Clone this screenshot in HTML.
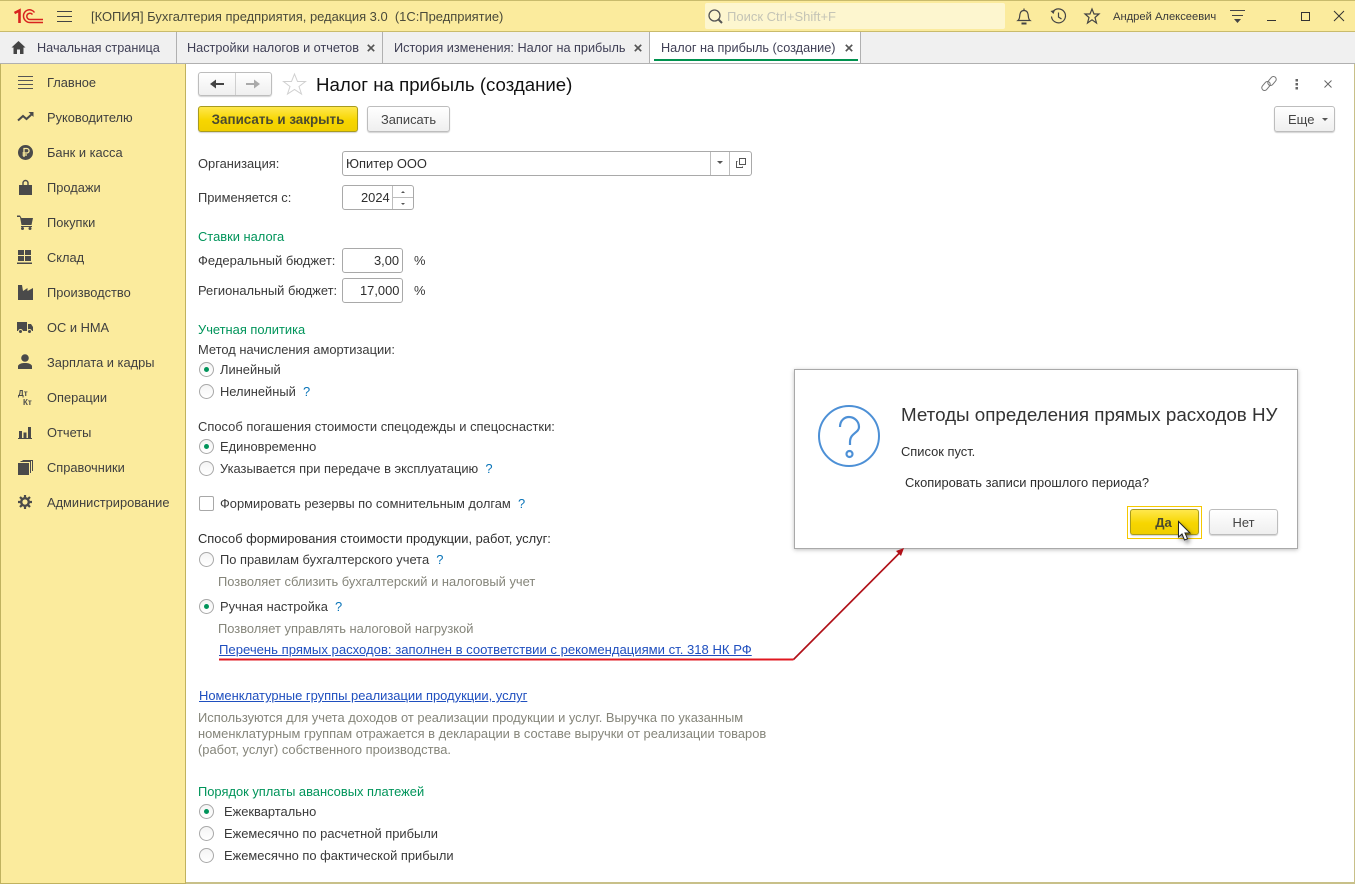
<!DOCTYPE html>
<html lang="ru"><head><meta charset="utf-8"><title>Налог на прибыль</title>
<style>
*{box-sizing:border-box}
html,body{margin:0;padding:0;width:1355px;height:884px;overflow:hidden;background:#fff}
body{position:relative;font-family:"Liberation Sans",Arial,sans-serif;font-size:12.9px;color:#4b4b4b}
.a{position:absolute}
.t{position:absolute;white-space:nowrap;line-height:16px;height:16px}
.d{color:#2e2e2e}
.s{color:#3a3a3a}
.g{color:#00945a}
.h{color:#85857a}
.q{color:#0a74b8;font-weight:400}
.l{color:#1f4fbf;text-decoration:underline;font-size:13.1px}
.r{position:absolute;width:15px;height:15px;border:1px solid #a8a8a8;border-radius:50%;background:linear-gradient(#f4f4f4,#fff)}
.r.on::after{content:"";position:absolute;left:4px;top:4px;width:5px;height:5px;border-radius:50%;background:#00945a}
.inp{position:absolute;background:#fff;border:1px solid #a9a9a9;border-radius:3px}
.btn{position:absolute;border:1px solid #bdbdbd;border-radius:3px;background:linear-gradient(#fff,#efefef);box-shadow:0 1px 1px rgba(0,0,0,.18);text-align:center;color:#444}
.y{border:1px solid #a89b1e;background:linear-gradient(#ffe84d,#f7d600 55%,#f0cf00);font-weight:700;color:#4a4a30}
.tab{position:absolute;top:32px;height:32px;border-right:1px solid #b0b0b0}
.tt{font-size:12.7px;color:#3f3f55}
.nav{position:absolute;left:47px;white-space:nowrap;line-height:16px;color:#3f3f3f;font-size:12.85px}
svg{position:absolute;overflow:visible}
</style></head><body>

<!-- top bar -->
<div class="a" style="left:0;top:0;width:1355px;height:32px;background:#fbeb9d;border-top:1px solid #c9bb6c;border-bottom:1px solid #c9bb6c"></div>
<svg style="left:14px;top:9px" width="30" height="15" viewBox="0 0 30 15"><g fill="none" stroke="#d8231f"><path d="M.5 4 5.500 1.500V14" stroke-width="2.600"/><path d="M20.500 3.500A6 6 0 0 0 9.500 7 6.500 6.500 0 0 0 16 13.500H29" stroke-width="1.500"/><path d="M18.500 5.500A3.200 3.200 0 0 0 12.800 7 3.200 3.200 0 0 0 16 10.500H29" stroke-width="1.500"/></g></svg>
<svg style="left:57px;top:11px" width="15" height="11"><path d="M0 .5H15M0 5.500H15M0 10.500H15" stroke="#444" stroke-width="1"/></svg>
<div class="t" style="left:91px;top:9px;color:#4a4a3a;font-size:12.95px">[КОПИЯ] Бухгалтерия предприятия, редакция 3.0&nbsp; (1С:Предприятие)</div>
<div class="a" style="left:705px;top:3px;width:300px;height:26px;background:#fdf6cf;border-radius:2px"></div>
<svg style="left:708px;top:9px" width="16" height="16"><circle cx="6.500" cy="6.500" r="5.500" fill="none" stroke="#555" stroke-width="1.300"/><path d="M10.500 10.500 14 14" stroke="#555" stroke-width="2"/></svg>
<div class="t" style="left:727px;top:9px;color:#c4c4b6;font-size:13px">Поиск Ctrl+Shift+F</div>
<svg style="left:1016px;top:8px" width="16" height="18" fill="none" stroke="#444" stroke-width="1.200"><path d="M2 12.500C4 11 3.500 8 4 6 4.500 3.500 6 2.500 8 2.500S11.500 3.500 12 6C12.500 8 12 11 14 12.500Z"/><path d="M8 .5V2.500"/><path d="M5.500 15.500H10.500" stroke-width="2"/></svg>
<svg style="left:1050px;top:8px" width="17" height="17" fill="none" stroke="#444" stroke-width="1.200"><path d="M3 3.500A7 7 0 1 1 1.500 8.500"/><path d="M.5 3 3.500 6 5 2" fill="#444" stroke="none"/><path d="M8.500 4.500V9L11.500 11"/></svg>
<svg style="left:1084px;top:8px" width="16" height="16" fill="none" stroke="#444" stroke-width="1.200"><path d="M8 1 10 6H15L11 9.500 12.500 15 8 11.800 3.500 15 5 9.500 1 6H6Z"/></svg>
<div class="t" style="left:1113px;top:9px;font-size:11.2px;color:#3a3a3a">Андрей Алексеевич</div>
<svg style="left:1230px;top:10px" width="15" height="15"><path d="M0 .5H15M2 5.500H13" stroke="#444"/><path d="M4 9H11L7.500 13Z" fill="#444"/></svg>
<div class="a" style="left:1267px;top:20px;width:9px;height:1px;background:#333"></div>
<div class="a" style="left:1301px;top:12px;width:9px;height:9px;border:1.400px solid #333"></div>
<svg style="left:1334px;top:11px" width="10" height="10"><path d="M0 0 10 10M10 0 0 10" stroke="#333" stroke-width="1"/></svg>

<!-- tabs -->
<div class="a" style="left:0;top:32px;width:1355px;height:32px;background:#f0f0f0;border-bottom:1px solid #b0b0b0"></div>
<div class="tab" style="left:0;width:177px"></div>
<svg style="left:11px;top:41px" width="15" height="13"><path d="M7.500 0 14.500 6.500H12.500V13H9V8.500H6V13H2.500V6.500H.5Z" fill="#444"/></svg>
<div class="t tt" style="left:37px;top:40px">Начальная страница</div>
<div class="tab" style="left:177px;width:206px"></div>
<div class="t tt" style="left:187px;top:40px">Настройки налогов и отчетов</div>
<svg style="left:367px;top:44px" width="8" height="8"><path d="M.8.8 7.200 7.200M7.200.8 .8 7.200" stroke="#555" stroke-width="1.700"/></svg>
<div class="tab" style="left:383px;width:267px"></div>
<div class="t tt" style="left:394px;top:40px">История изменения: Налог на прибыль</div>
<svg style="left:634px;top:44px" width="8" height="8"><path d="M.8.8 7.200 7.200M7.200.8 .8 7.200" stroke="#555" stroke-width="1.700"/></svg>
<div class="tab" style="left:650px;width:211px;background:#fff;height:32px;border-bottom:1px solid #b0b0b0"></div>
<div class="t tt" style="left:661px;top:40px">Налог на прибыль (создание)</div>
<svg style="left:845px;top:44px" width="8" height="8"><path d="M.8.8 7.200 7.200M7.200.8 .8 7.200" stroke="#555" stroke-width="1.700"/></svg>
<div class="a" style="left:654px;top:59px;width:204px;height:2px;background:#00924f"></div>

<!-- sidebar -->
<div class="a" style="left:0;top:64px;width:186px;height:820px;background:#fbeb9d;border-left:1px solid #c0b25f;border-right:1px solid #c0b25f;border-bottom:1px solid #c0b25f"></div>
<svg style="left:18px;top:76px" width="15" height="13"><path d="M0 .5H15M0 4.500H15M0 8.500H15M0 12.500H15" stroke="#555"/></svg>
<div class="nav" style="top:75px">Главное</div>
<svg style="left:17px;top:112px" width="17" height="10" fill="none"><path d="M1 8.500 6 4 9.500 7 15 2" stroke="#4a4a4a" stroke-width="2"/><path d="M11.500 0H16.500V5Z" fill="#4a4a4a"/></svg>
<div class="nav" style="top:110px">Руководителю</div>
<svg style="left:18px;top:145px" width="15" height="15"><circle cx="7.500" cy="7.500" r="7.500" fill="#4a4a4a"/><path d="M6 12V3.500H8.800A2.200 2.200 0 0 1 8.800 8H4.500M4.500 10H9" fill="none" stroke="#fbeb9d" stroke-width="1.300"/></svg>
<div class="nav" style="top:145px">Банк и касса</div>
<svg style="left:19px;top:180px" width="13" height="15"><path d="M0 5H13V15H0Z" fill="#4a4a4a"/><path d="M4 8V3A2.500 2.500 0 0 1 9 3V8" fill="none" stroke="#4a4a4a" stroke-width="1.400"/></svg>
<div class="nav" style="top:180px">Продажи</div>
<svg style="left:17px;top:215px" width="16" height="15"><path d="M0 .5H3L4.500 3H16L14.500 10H4.500L3 2H0Z" fill="#4a4a4a"/><rect x="4" y="11" width="11" height="1" fill="#4a4a4a"/><circle cx="5.500" cy="13.500" r="1.500" fill="#4a4a4a"/><circle cx="13" cy="13.500" r="1.500" fill="#4a4a4a"/></svg>
<div class="nav" style="top:215px">Покупки</div>
<svg style="left:17px;top:250px" width="15" height="15" fill="#4a4a4a"><rect x="1" width="6" height="5"/><rect x="8" width="6" height="5"/><rect x="1" y="6" width="6" height="5"/><rect x="8" y="6" width="6" height="5"/><rect y="12.500" width="15" height="1.500"/></svg>
<div class="nav" style="top:250px">Склад</div>
<svg style="left:18px;top:285px" width="15" height="15"><path d="M0 15V0H4L5 6 9.500 3V6L15 3V15Z" fill="#4a4a4a"/></svg>
<div class="nav" style="top:285px">Производство</div>
<svg style="left:17px;top:321px" width="16" height="13"><path d="M0 1H10V10H0Z" fill="#4a4a4a"/><path d="M11 3H14L16 6V10H11Z" fill="#4a4a4a"/><circle cx="3.500" cy="10.500" r="2" fill="#4a4a4a" stroke="#fbeb9d"/><circle cx="12.500" cy="10.500" r="2" fill="#4a4a4a" stroke="#fbeb9d"/></svg>
<div class="nav" style="top:320px">ОС и НМА</div>
<svg style="left:18px;top:354px" width="14" height="15" fill="#4a4a4a"><circle cx="7" cy="4" r="3.800"/><path d="M0 15V12C1 9.500 4 9 7 9S13 9.500 14 12V15Z"/></svg>
<div class="nav" style="top:355px">Зарплата и кадры</div>
<div class="t" style="left:18px;top:389px;font-size:8px;font-weight:700;color:#4a4a4a;line-height:10px;height:10px">Дт</div>
<div class="t" style="left:23px;top:398px;font-size:8px;font-weight:700;color:#4a4a4a;line-height:10px;height:10px">Кт</div>
<div class="nav" style="top:390px">Операции</div>
<svg style="left:18px;top:427px" width="14" height="12" fill="#4a4a4a"><rect x="1" y="4" width="3" height="7"/><rect x="5.500" y="5.500" width="3" height="5.500"/><rect x="10" width="3" height="11"/><rect y="11" width="14" height="1"/></svg>
<div class="nav" style="top:425px">Отчеты</div>
<svg style="left:18px;top:460px" width="15" height="15"><rect y="3" width="11" height="12" fill="#4a4a4a"/><path d="M2.500 1.500H12.500V13M4.500.5H14.500V11" fill="none" stroke="#4a4a4a"/></svg>
<div class="nav" style="top:460px">Справочники</div>
<svg style="left:18px;top:495px" width="14" height="14"><circle cx="7" cy="7" r="3.800" fill="none" stroke="#4a4a4a" stroke-width="2.400"/><path d="M7 0V14M0 7H14M2 2 12 12M12 2 2 12" stroke="#4a4a4a" stroke-width="2.200" stroke-dasharray="2.400 9.200 2.400 0"/></svg>
<div class="nav" style="top:495px">Администрирование</div>

<!-- right/bottom edge -->
<div class="a" style="left:186px;top:882px;width:1169px;height:2px;background:#c8c089"></div>
<div class="a" style="left:1354px;top:64px;width:1px;height:820px;background:#c8c089"></div>

<!-- header -->
<div class="btn" style="left:198px;top:72px;width:74px;height:24px"></div>
<div class="a" style="left:235px;top:73px;width:1px;height:22px;background:#cfcfcf"></div>
<svg style="left:210px;top:79px" width="14" height="10"><path d="M0 5 6 .5V4H14V6H6V9.500Z" fill="#444"/></svg>
<svg style="left:246px;top:79px" width="14" height="10"><path d="M14 5 8 .5V4H0V6H8V9.500Z" fill="#aaa"/></svg>
<svg style="left:283px;top:73px" width="23" height="22"><path d="M11.500 1 14.500 8.500H22.500L16 13.500 18.500 21 11.500 16.500 4.500 21 7 13.500 .5 8.500H8.500Z" fill="#fff" stroke="#d0d0d0"/></svg>
<div class="t" style="left:316px;top:74px;font-size:18.65px;line-height:22px;height:22px;color:#111">Налог на прибыль (создание)</div>
<svg style="left:1261px;top:76px" width="16" height="15" fill="none" stroke="#777" stroke-width="1"><rect x="-5" y="-2.800" width="10" height="5.600" rx="2.800" transform="translate(5,10) rotate(-50)"/><rect x="-5" y="-2.800" width="10" height="5.600" rx="2.800" transform="translate(11,5) rotate(-50)"/></svg>
<svg style="left:1295px;top:79px" width="4" height="11" fill="#666"><rect x="0.500" width="2.500" height="2.500"/><rect x="0.500" y="4" width="2.500" height="2.500"/><rect x="0.500" y="8" width="2.500" height="2.500"/></svg>
<svg style="left:1324px;top:80px" width="8" height="8"><path d="M.5.5 7.500 7.500M7.500.5 .5 7.500" stroke="#666"/></svg>

<div class="btn y" style="left:198px;top:106px;width:160px;height:26px;font-size:13.4px;line-height:25px">Записать и закрыть</div>
<div class="btn" style="left:367px;top:106px;width:83px;height:26px;line-height:25px">Записать</div>
<div class="btn" style="left:1274px;top:106px;width:61px;height:26px;line-height:25px;text-align:left;padding-left:13px;font-size:13px">Еще</div>
<svg style="left:1322px;top:118px" width="6" height="3"><path d="M0 0H6L3 3Z" fill="#555"/></svg>

<!-- form -->
<div class="t s" style="left:198px;top:156px">Организация:</div>
<div class="inp" style="left:342px;top:151px;width:410px;height:25px"></div>
<div class="t d" style="left:346px;top:156px">Юпитер ООО</div>
<div class="a" style="left:710px;top:152px;width:1px;height:23px;background:#bdbdbd"></div>
<div class="a" style="left:729px;top:152px;width:1px;height:23px;background:#bdbdbd"></div>
<svg style="left:717px;top:161px" width="6" height="3"><path d="M0 0H6L3 3Z" fill="#555"/></svg>
<svg style="left:736px;top:158px" width="10" height="10" fill="none" stroke="#555"><rect x="3.500" y=".5" width="6" height="6"/><path d="M1.500 3.500H.5V9.500H6.500V8.500"/></svg>

<div class="t s" style="left:198px;top:190px">Применяется с:</div>
<div class="inp" style="left:342px;top:185px;width:72px;height:25px"></div>
<div class="t d" style="left:361px;top:190px">2024</div>
<div class="a" style="left:392px;top:186px;width:1px;height:23px;background:#bdbdbd"></div>
<div class="a" style="left:392px;top:197px;width:21px;height:1px;background:#bdbdbd"></div>
<svg style="left:401px;top:191px" width="4" height="14"><path d="M0 2H4L2 0ZM0 12H4L2 14Z" fill="#555"/></svg>

<div class="t g" style="left:198px;top:229px">Ставки налога</div>
<div class="t s" style="left:198px;top:253px;font-size:13px">Федеральный бюджет:</div>
<div class="inp" style="left:342px;top:248px;width:61px;height:25px"></div>
<div class="t d" style="left:374px;top:253px">3,00</div>
<div class="t s" style="left:414px;top:253px">%</div>
<div class="t s" style="left:198px;top:283px">Региональный бюджет:</div>
<div class="inp" style="left:342px;top:278px;width:61px;height:25px"></div>
<div class="t d" style="left:360px;top:283px">17,000</div>
<div class="t s" style="left:414px;top:283px">%</div>

<div class="t g" style="left:198px;top:322px">Учетная политика</div>
<div class="t s" style="left:198px;top:342px">Метод начисления амортизации:</div>
<div class="r on" style="left:199px;top:362px"></div>
<div class="t s" style="left:220px;top:362px">Линейный</div>
<div class="r" style="left:199px;top:384px"></div>
<div class="t s" style="left:220px;top:384px">Нелинейный&nbsp; <span class="q">?</span></div>

<div class="t s" style="left:198px;top:419px;font-size:12.95px">Способ погашения стоимости спецодежды и спецоснастки:</div>
<div class="r on" style="left:199px;top:439px"></div>
<div class="t s" style="left:220px;top:439px">Единовременно</div>
<div class="r" style="left:199px;top:461px"></div>
<div class="t s" style="left:220px;top:461px">Указывается при передаче в эксплуатацию&nbsp; <span class="q">?</span></div>
<div class="a" style="left:199px;top:496px;width:15px;height:15px;border:1px solid #a8a8a8;border-radius:2px;background:#fff"></div>
<div class="t s" style="left:220px;top:496px">Формировать резервы по сомнительным долгам&nbsp; <span class="q">?</span></div>

<div class="t d" style="left:198px;top:531px">Способ формирования стоимости продукции, работ, услуг:</div>
<div class="r" style="left:199px;top:552px"></div>
<div class="t s" style="left:220px;top:552px">По правилам бухгалтерского учета&nbsp; <span class="q">?</span></div>
<div class="t h" style="left:218px;top:574px">Позволяет сблизить бухгалтерский и налоговый учет</div>
<div class="r on" style="left:199px;top:599px"></div>
<div class="t s" style="left:220px;top:599px">Ручная настройка&nbsp; <span class="q">?</span></div>
<div class="t h" style="left:218px;top:621px">Позволяет управлять налоговой нагрузкой</div>
<div class="t l" style="left:219px;top:642px">Перечень прямых расходов: заполнен в соответствии с рекомендациями ст. 318 НК РФ</div>

<div class="t l" style="left:199px;top:688px;font-size:12.95px">Номенклатурные группы реализации продукции, услуг</div>
<div class="t h" style="left:198px;top:710px">Используются для учета доходов от реализации продукции и услуг. Выручка по указанным</div>
<div class="t h" style="left:198px;top:726px">номенклатурным группам отражается в декларации в составе выручки от реализации товаров</div>
<div class="t h" style="left:198px;top:742px">(работ, услуг) собственного производства.</div>

<div class="t g" style="left:198px;top:784px">Порядок уплаты авансовых платежей</div>
<div class="r on" style="left:199px;top:804px"></div>
<div class="t s" style="left:224px;top:804px">Ежеквартально</div>
<div class="r" style="left:199px;top:826px"></div>
<div class="t s" style="left:224px;top:826px">Ежемесячно по расчетной прибыли</div>
<div class="r" style="left:199px;top:848px"></div>
<div class="t s" style="left:224px;top:848px">Ежемесячно по фактической прибыли</div>

<!-- dialog -->
<div class="a" style="left:794px;top:369px;width:504px;height:180px;background:#fff;border:1px solid #a9a9a9;box-shadow:0 1px 4px rgba(0,0,0,.25)"></div>
<svg style="left:817px;top:404px" width="64" height="64" fill="none" stroke="#4d90d6" stroke-width="2"><circle cx="32" cy="32" r="30"/><path d="M23 23C23 16 28 13 32 13 37 13 42 17 42 23 42 29 33 29 33 38V41" stroke-width="2.200"/><circle cx="32.500" cy="50" r="3" stroke-width="2.200"/></svg>
<div class="t" style="left:901px;top:404px;font-size:18.8px;line-height:22px;height:22px;color:#333">Методы определения прямых расходов НУ</div>
<div class="t d" style="left:901px;top:444px">Список пуст.</div>
<div class="t d" style="left:905px;top:475px">Скопировать записи прошлого периода?</div>
<div class="a" style="left:1127px;top:506px;width:75px;height:33px;border:1px solid #f5c800"></div>
<div class="btn y" style="left:1130px;top:509px;width:69px;height:26px;font-size:13px;line-height:25px;padding-right:2px">Да</div>
<div class="btn" style="left:1209px;top:509px;width:69px;height:26px;line-height:25px">Нет</div>
<svg style="left:1178px;top:521px;filter:drop-shadow(2px 3px 2px rgba(0,0,0,.45))" width="14" height="20"><path d="M.5.5V16L4 13 6.500 19 9.500 17.800 7 12H12Z" fill="#fff" stroke="#222" stroke-width="1"/></svg>

<!-- arrow -->
<svg style="left:0;top:0" width="1355" height="884" fill="none"><path d="M219 659.500H793.500" stroke="#e01820" stroke-width="2"/><path d="M793.500 659.500 900 552.500" stroke="#b01018" stroke-width="1.700"/><path d="M904 548 901 556 896 551Z" fill="#b01018"/></svg>
</body></html>
